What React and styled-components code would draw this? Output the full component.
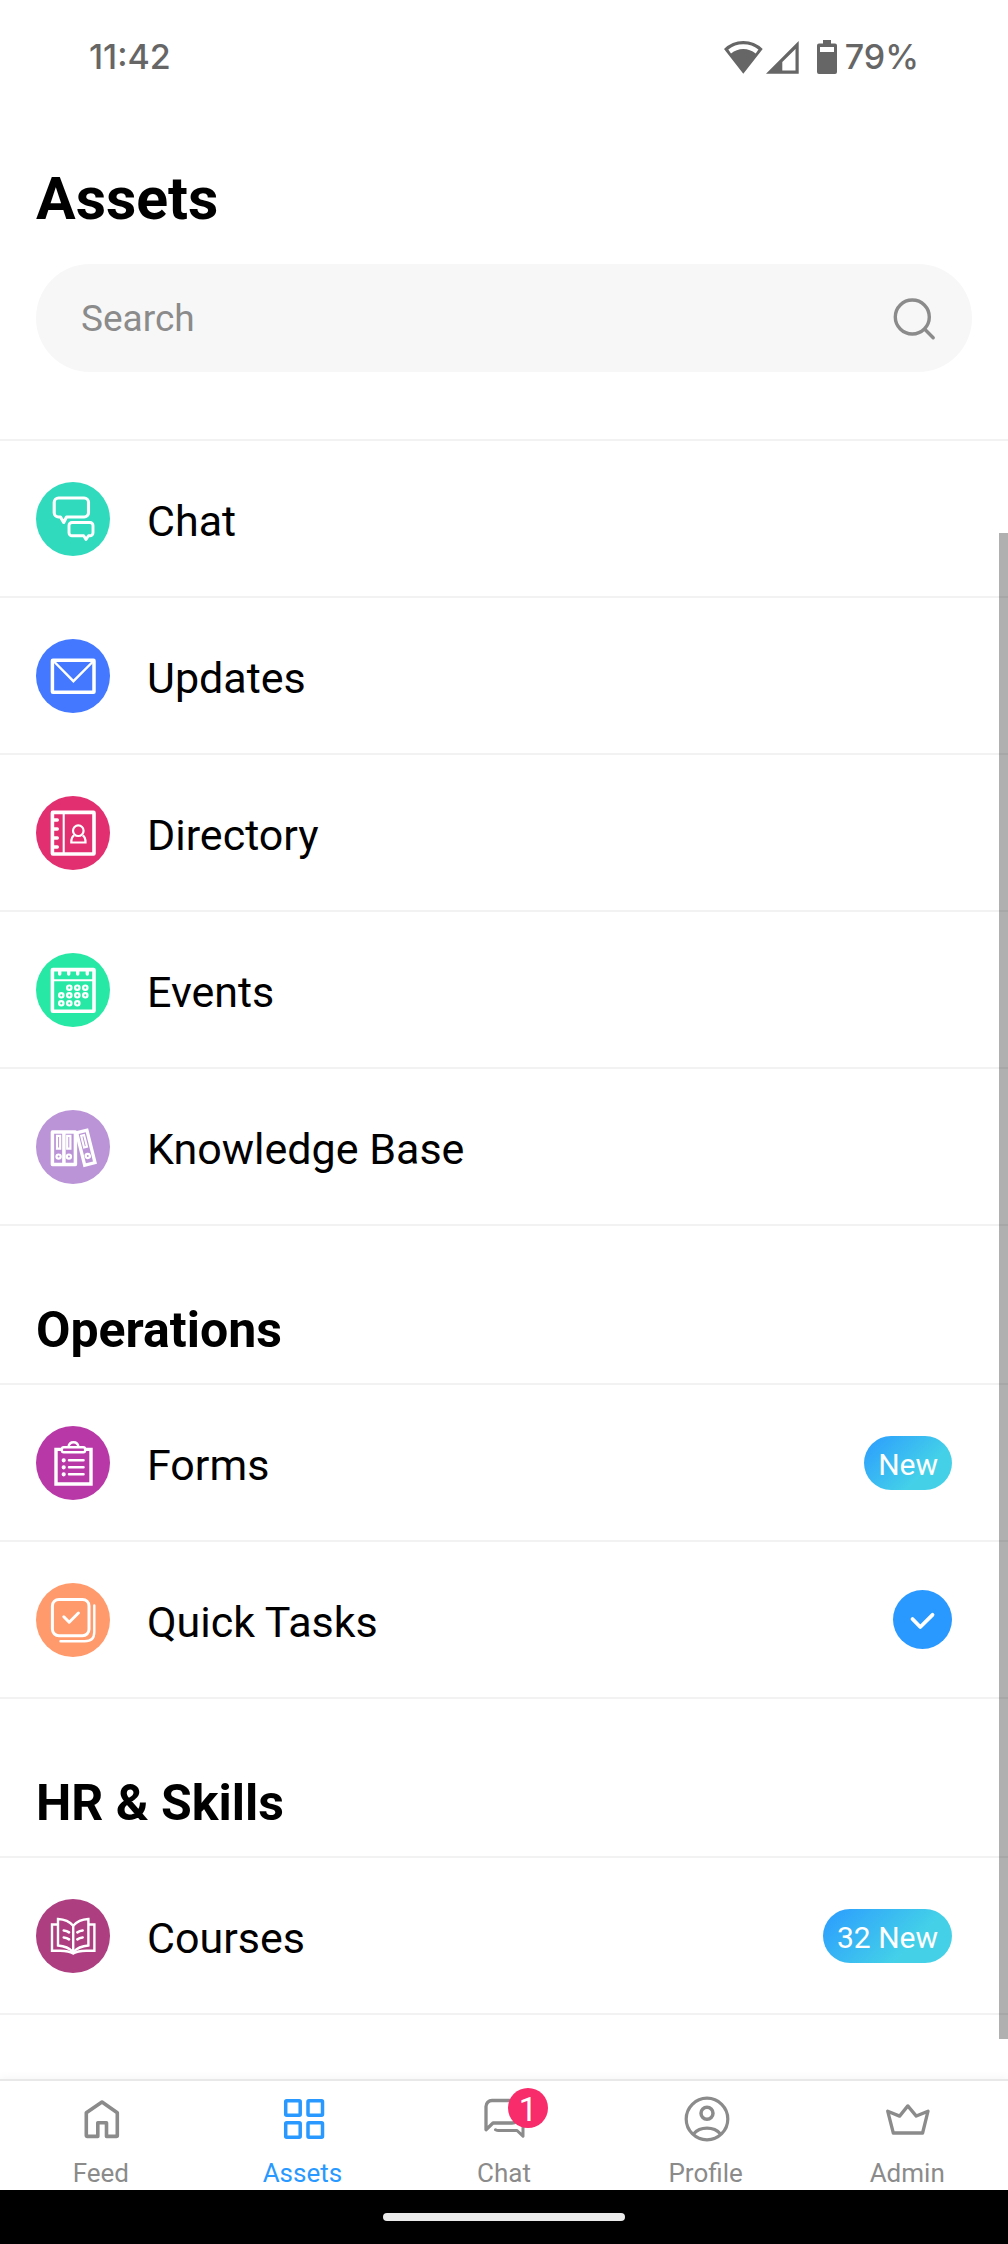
import React, { useState } from "react";
import styled, { createGlobalStyle } from "styled-components";

const GlobalStyle = createGlobalStyle`
  * {
    box-sizing: border-box;
  }
  body {
    margin: 0;
    background-color: #fff;
    color: #000;
    font-family: Roboto, "Liberation Sans", sans-serif;
  }
`;

const Page = styled.div`
  display: flex;
  flex-direction: column;
  min-height: 100vh;
`;

const StatusBar = styled.div`
  display: flex;
  justify-content: space-between;
  align-items: center;
  padding: 35px 89px;
  color: #666;
  font-family: Inter, sans-serif;
  font-size: 34px;
  font-weight: 500;
  line-height: 44px;
  .status {
    display: flex;
    align-items: center;
  }
  .battery {
    margin: 0 8px 0 17px;
  }
  svg {
    display: block;
  }
`;

const Header = styled.header`
  padding: 51px 36px 67px;
  h1 {
    margin: 0 0 31px;
    font-size: 59px;
    font-weight: 700;
    line-height: 68px;
  }
`;

const SearchBox = styled.form`
  display: flex;
  align-items: center;
  height: 108px;
  padding: 0 32px 0 45px;
  border-radius: 54px;
  background-color: #f7f7f7;
  input {
    flex: 1;
    min-width: 0;
    padding: 0;
    border: none;
    background: none;
    font-family: inherit;
    font-size: 37px;
    &:focus {
      outline: none;
    }
    &::placeholder {
      color: #8b8b8b;
      opacity: 1;
    }
  }
  button {
    display: flex;
    padding: 0;
    border: none;
    background: none;
    color: #8b8b8b;
    cursor: pointer;
  }
`;

const Main = styled.main`
  flex: 1;
  position: relative;
  padding-bottom: 64px;
`;

const ScrollThumb = styled.div`
  position: absolute;
  top: 94px;
  right: 0;
  bottom: 40px;
  width: 9px;
  background-color: rgba(0, 0, 0, 0.31);
`;

const SectionTitle = styled.h2`
  margin: 0;
  padding: 76px 36px 24px;
  font-size: 50px;
  font-weight: 700;
  line-height: 57px;
`;

const List = styled.ul`
  margin: 0;
  padding: 0;
  list-style: none;
  border-top: 2px solid #f2f2f2;
`;

const Row = styled.a`
  display: flex;
  align-items: center;
  min-height: 157px;
  padding: 0 56px 0 36px;
  border-bottom: 2px solid #f2f2f2;
  color: inherit;
  text-decoration: none;
`;

const IconCircle = styled.span`
  display: flex;
  width: 74px;
  height: 74px;
  border-radius: 50%;
  background-color: ${({ $color }) => $color};
  color: #fff;
`;

const RowLabel = styled.span`
  flex: 1;
  padding: 4px 0 0 37px;
  font-size: 43px;
  line-height: 50px;
`;

const Pill = styled.span`
  padding: 3px 14px 0;
  border-radius: 27px;
  background: linear-gradient(135deg, #2b9bff 0%, #44d1e8 68%);
  color: #fff;
  font-size: 30px;
  line-height: 51px;
`;

const CheckMark = styled.span`
  display: flex;
  width: 59px;
  height: 59px;
  border-radius: 50%;
  background-color: #2999ff;
  color: #fff;
`;

const TabBar = styled.nav`
  display: grid;
  grid-template-columns: repeat(5, 1fr);
  height: 111px;
  padding-top: 14px;
  border-top: 2px solid #e8e8e8;
  box-shadow: 0 -2px 8px rgba(0, 0, 0, 0.04);
  background-color: #fff;
`;

const Tab = styled.a`
  display: flex;
  flex-direction: column;
  align-items: center;
  gap: 15px;
  color: ${({ $active }) => ($active ? "#2999ff" : "#8b8b8b")};
  font-size: 26px;
  line-height: 30px;
  text-decoration: none;
  .icon {
    position: relative;
    display: flex;
  }
`;

const Badge = styled.span`
  position: absolute;
  top: -7px;
  left: 28px;
  width: 40px;
  height: 40px;
  border-radius: 50%;
  background-color: #f82c6b;
  color: #fff;
  font-size: 33px;
  line-height: 44px;
  text-align: center;
`;

const SystemBar = styled.div`
  display: flex;
  justify-content: center;
  align-items: center;
  height: 54px;
  background-color: #000;
  span {
    width: 24%;
    height: 8px;
    border-radius: 4px;
    background-color: #ebebeb;
  }
`;

const Glyph = ({ size = 74, width = 3, children }) => (
  <svg
    width={size}
    height={size}
    viewBox={`0 0 ${size} ${size}`}
    fill="none"
    stroke="currentColor"
    strokeWidth={width}
    aria-hidden="true"
  >
    {children}
  </svg>
);

const ChatGlyph = () => (
  <Glyph width={3.1}>
    <path
      strokeLinejoin="round"
      d="M24.5 35H22.5a4.3 4.3 0 0 1-4.3-4.3V20.3a4.3 4.3 0 0 1 4.3-4.3h25.7a4.3 4.3 0 0 1 4.3 4.3v10.4a4.3 4.3 0 0 1-4.3 4.3H30.5l-2.8 5.5z"
    />
    <path
      strokeLinejoin="round"
      strokeWidth="2.9"
      d="M36 40.5h18a3 3 0 0 1 3 3v7.3a3 3 0 0 1-3 3h-1.5L50 57.5l-2.3-3.7H36a3 3 0 0 1-3-3v-7.3a3 3 0 0 1 3-3z"
    />
  </Glyph>
);

const MailGlyph = () => (
  <Glyph width={3.5}>
    <rect x="16.4" y="21.3" width="41.6" height="32" rx="0.5" />
    <path strokeWidth="2.4" d="M18 22.5l19.4 19.7L57 22.5" />
  </Glyph>
);

const DirectoryGlyph = () => (
  <Glyph width={3.6}>
    <rect x="16.4" y="16.4" width="41.6" height="41.6" rx="0.5" />
    <path strokeWidth="2.1" d="M27.7 17v40" />
    <path strokeLinecap="round" strokeWidth="3.4" d="M17 24h4.3M17 33h4.3M17 42h4.3M17 51h4.3" />
    <circle cx="42.3" cy="34.7" r="5.3" strokeWidth="2.2" />
    <path strokeWidth="2.2" d="M38.2 39.6c-2.2 1-2.9 3.5-2.9 6.9h14.2c0-3.4-.7-5.9-2.9-6.9" />
  </Glyph>
);

const eventDots = [
  [33.3, 34.7], [41.3, 34.7], [49.3, 34.7],
  [25.3, 42.3], [33.3, 42.3], [41.3, 42.3], [49.3, 42.3],
  [25.3, 50.3], [33.3, 50.3], [41.3, 50.3],
];

const EventsGlyph = () => (
  <Glyph width={3.6}>
    <rect x="16.4" y="16.6" width="41.6" height="41.6" rx="0.5" />
    <path strokeWidth="2" d="M17 27.3h40" />
    <path strokeLinecap="round" strokeWidth="3.4" d="M23.7 17v4M32.7 17v4M41.7 17v4M51.3 17v4" />
    {eventDots.map(([x, y]) => (
      <circle key={`${x}-${y}`} cx={x} cy={y} r="2.2" strokeWidth="2.2" />
    ))}
  </Glyph>
);

const BindersGlyph = () => (
  <Glyph width={3.5}>
    <path strokeLinejoin="round" d="M16.4 22h23v32.6h-23zM27.9 22v32" />
    <path strokeWidth="2.2" d="M21 25.9h3.2v12.8H21zM31.2 25.9h3.2v12.8h-3.2z" />
    <circle cx="22.6" cy="46.6" r="2.1" strokeWidth="2.2" />
    <circle cx="32.9" cy="46.6" r="2.1" strokeWidth="2.2" />
    <g transform="rotate(-14 49.8 37.7)">
      <rect x="44.5" y="21" width="10.6" height="33.4" strokeWidth="3.3" />
      <rect x="48.2" y="25" width="3" height="12" strokeWidth="2.1" />
      <circle cx="49.7" cy="46.2" r="2.1" strokeWidth="2.2" />
    </g>
  </Glyph>
);

const FormsGlyph = () => (
  <Glyph width={3.4}>
    <path d="M25 23.4H20V58h35V23.4h-5" />
    <rect x="25.9" y="21.2" width="23.2" height="5" rx="1.8" strokeWidth="2.4" />
    <path strokeWidth="2.4" d="M32.5 21c.4-3 2.3-4.7 5-4.7s4.6 1.7 5 4.7" />
    <path strokeLinecap="round" strokeWidth="2.5" d="M33 34.3h14.5M33 41.3h14.5M33 48.3h14.5" />
    <path strokeLinecap="round" strokeWidth="4.2" d="M27.7 34.3h.01M27.7 41.3h.01M27.7 48.3h.01" />
  </Glyph>
);

const TasksGlyph = () => (
  <Glyph width={3}>
    <rect x="16.4" y="16.4" width="36.6" height="36.4" rx="6.5" />
    <path strokeLinecap="round" strokeLinejoin="round" d="M27.8 33.8l5.4 5.4 9.2-9.2" />
    <path strokeLinecap="round" strokeWidth="2.4" d="M58.3 22.5V49c0 6-3.5 9.300-9.500 9.300H24.500" />
  </Glyph>
);

const BookGlyph = () => (
  <Glyph width={2.4}>
    <path d="M22 25.5h-6v26.3h8c6 0 10 .6 13.2 2.7 3.2-2.1 7.2-2.7 13.2-2.7h8V25.5h-6" />
    <path d="M22 46.5V20c6.500.3 11.500 2.400 15.200 6.800C40.900 22.400 45.900 20.300 52.400 20v26.500C46 47 41 49 37.200 53 33.400 49 28.400 47 22 46.500z" />
    <path d="M37.200 26v28" />
    <path
      strokeLinecap="round"
      strokeWidth="2.7"
      d="M27.800 31.500q3 .3 5.200 1.800M27.800 38.500q3 .3 5.200 1.800M46.600 31.500q-3 .3-5.200 1.800M46.600 38.500q-3 .3-5.200 1.800"
    />
  </Glyph>
);

const HomeGlyph = () => (
  <Glyph size={48} width={3.6}>
    <path
      strokeLinejoin="round"
      d="M9.300 40.500V17.800L25 7l15.300 10.800v22.700a.9.900 0 0 1-.9.900H29.500V27.800h-8.700v13.600H10.200a.9.900 0 0 1-.9-.9z"
    />
  </Glyph>
);

const GridGlyph = () => (
  <Glyph size={48} width={3.5}>
    <rect x="7.7" y="5.7" width="14.5" height="14.5" rx="1" />
    <rect x="30" y="5.7" width="14.5" height="14.5" rx="1" />
    <rect x="7.7" y="27.8" width="14.5" height="14.5" rx="1" />
    <rect x="30" y="27.8" width="14.5" height="14.5" rx="1" />
  </Glyph>
);

const ChatTabGlyph = () => (
  <Glyph size={48} width={3.3}>
    <path strokeLinejoin="round" d="M6 34.7V11.500a6 6 0 0 1 6-6h21a5 5 0 0 1 5 5V22a6 6 0 0 1-6 6H13z" />
    <path strokeLinecap="round" strokeLinejoin="round" strokeWidth="3" d="M15.500 34.700q1.500.8 3 .8H37l6 5.700V17" />
  </Glyph>
);

const ProfileGlyph = () => (
  <Glyph size={48} width={3.2}>
    <circle cx="25" cy="24" r="20.8" />
    <circle cx="25" cy="18.3" r="6" strokeWidth="3.5" />
    <path d="M11.500 39Q16.500 33.200 25 33.200T38.500 39" />
  </Glyph>
);

const CrownGlyph = () => (
  <Glyph size={48} width={3.3}>
    <path strokeLinejoin="round" d="M4.700 16.200l11.900 4.900 8.200-10.200 8.500 10.200L45 16.200 39.600 38H10.300z" />
  </Glyph>
);

const sections = [
  {
    items: [
      { name: "Chat", color: "#30dabc", icon: <ChatGlyph /> },
      { name: "Updates", color: "#4378ff", icon: <MailGlyph /> },
      { name: "Directory", color: "#e22f6f", icon: <DirectoryGlyph /> },
      { name: "Events", color: "#27e8a5", icon: <EventsGlyph /> },
      { name: "Knowledge Base", color: "#ba94d7", icon: <BindersGlyph /> },
    ],
  },
  {
    title: "Operations",
    items: [
      { name: "Forms", color: "#b938a8", icon: <FormsGlyph />, pill: "New" },
      { name: "Quick Tasks", color: "#ff9a6c", icon: <TasksGlyph />, done: true },
    ],
  },
  {
    title: "HR & Skills",
    items: [
      { name: "Courses", color: "#ad3e80", icon: <BookGlyph />, pill: "32 New" },
    ],
  },
];

const tabs = [
  { name: "Feed", icon: <HomeGlyph /> },
  { name: "Assets", icon: <GridGlyph />, active: true },
  { name: "Chat", icon: <ChatTabGlyph />, badge: 1 },
  { name: "Profile", icon: <ProfileGlyph /> },
  { name: "Admin", icon: <CrownGlyph /> },
];

export default function App() {
  const [query, setQuery] = useState("");
  return (
    <Page>
      <GlobalStyle />
      <StatusBar>
        <span>11:42</span>
        <div className="status">
          <svg width="39" height="34" viewBox="0 0 39 34" fill="currentColor" aria-hidden="true">
            <path
              fillRule="evenodd"
              d="M0 9Q8 1 19.300 1T38.700 9L19.300 33.700zM4.300 9.500l2.700 4Q12.500 9 19.300 9t12.400 4.500l2.700-4Q28 4.200 19.300 4.200T4.300 9.500z"
            />
          </svg>
          <svg width="37" height="34" viewBox="0 0 37 34" fill="currentColor" aria-hidden="true">
            <path fillRule="evenodd" d="M3 33.700L35.700 1v32.700zM19.300 22v8.500H32.500V9z" />
          </svg>
          <svg className="battery" width="20" height="34" viewBox="0 0 20 34" fill="currentColor" aria-hidden="true">
            <path
              fillRule="evenodd"
              d="M6 0h8v3.500h4a2 2 0 0 1 2 2V32a2 2 0 0 1-2 2H2a2 2 0 0 1-2-2V5.500a2 2 0 0 1 2-2h4zM3 7v5h14V7z"
            />
          </svg>
          <span>79%</span>
        </div>
      </StatusBar>
      <Header>
        <h1>Assets</h1>
        <SearchBox role="search" onSubmit={(e) => e.preventDefault()}>
          <input
            type="text"
            aria-label="Search"
            placeholder="Search"
            value={query}
            onChange={(e) => setQuery(e.target.value)}
          />
          <button type="submit" aria-label="Search">
            <Glyph size={48} width={3.4}>
              <circle cx="20.3" cy="23" r="17" />
              <path strokeLinecap="round" d="M33 35.500l8.200 8.200" />
            </Glyph>
          </button>
        </SearchBox>
      </Header>
      <Main>
        {sections.map(({ title, items }) => (
          <section key={title || "main"}>
            {title && <SectionTitle>{title}</SectionTitle>}
            <List>
              {items.map(({ name, color, icon, pill, done }) => (
                <li key={name}>
                  <Row href="#">
                    <IconCircle $color={color}>{icon}</IconCircle>
                    <RowLabel>{name}</RowLabel>
                    {pill && <Pill>{pill}</Pill>}
                    {done && (
                      <CheckMark>
                        <Glyph size={59} width={3.8}>
                          <path strokeLinecap="round" strokeLinejoin="round" d="M19.500 29l7.800 8L39.500 24.800" />
                        </Glyph>
                      </CheckMark>
                    )}
                  </Row>
                </li>
              ))}
            </List>
          </section>
        ))}
        <ScrollThumb />
      </Main>
      <TabBar>
        {tabs.map(({ name, icon, active, badge }) => (
          <Tab key={name} href="#" $active={active}>
            <span className="icon">
              {icon}
              {badge && <Badge>{badge}</Badge>}
            </span>
            {name}
          </Tab>
        ))}
      </TabBar>
      <SystemBar>
        <span />
      </SystemBar>
    </Page>
  );
}
